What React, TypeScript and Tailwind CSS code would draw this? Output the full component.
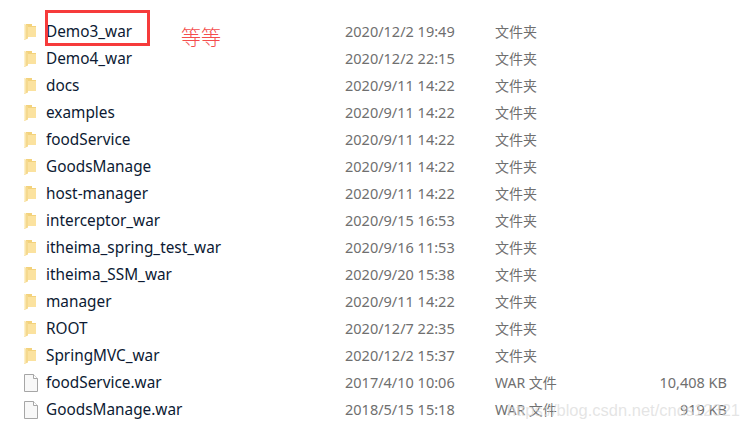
import React from "react"

const files = [
  { name: "Demo3_war", date: "2020/12/2 19:49", type: "文件夹", size: "" },
  { name: "Demo4_war", date: "2020/12/2 22:15", type: "文件夹", size: "" },
  { name: "docs", date: "2020/9/11 14:22", type: "文件夹", size: "" },
  { name: "examples", date: "2020/9/11 14:22", type: "文件夹", size: "" },
  { name: "foodService", date: "2020/9/11 14:22", type: "文件夹", size: "" },
  { name: "GoodsManage", date: "2020/9/11 14:22", type: "文件夹", size: "" },
  { name: "host-manager", date: "2020/9/11 14:22", type: "文件夹", size: "" },
  { name: "interceptor_war", date: "2020/9/15 16:53", type: "文件夹", size: "" },
  { name: "itheima_spring_test_war", date: "2020/9/16 11:53", type: "文件夹", size: "" },
  { name: "itheima_SSM_war", date: "2020/9/20 15:38", type: "文件夹", size: "" },
  { name: "manager", date: "2020/9/11 14:22", type: "文件夹", size: "" },
  { name: "ROOT", date: "2020/12/7 22:35", type: "文件夹", size: "" },
  { name: "SpringMVC_war", date: "2020/12/2 15:37", type: "文件夹", size: "" },
  { name: "foodService.war", date: "2017/4/10 10:06", type: "WAR 文件", size: "10,408 KB" },
  { name: "GoodsManage.war", date: "2018/5/15 15:18", type: "WAR 文件", size: "919 KB" },
]

function FolderIcon() {
  return (
    <svg width="13" height="18" viewBox="0 0 13 18">
      <path d="M2 1h6v2h4v11H2z" fill="#f3d27c" />
      <path d="M4 4h8v10H4z" fill="#fbe29f" />
      <path d="M0 1l4 1.500v13l-3.500 1.500L0 16z" fill="#f5d98e" />
      <path d="M0 1l1.500 .5v15L0 16z" fill="#fdf0c8" />
    </svg>
  )
}

function FileIcon() {
  return (
    <svg width="14" height="18" viewBox="0 0 14 18">
      <path d="M.5.5h9l4 4v13H.5z" fill="#f8f8f8" stroke="#a6a6a6" />
      <path d="M9.500.5v4h4" fill="#fff" stroke="#a6a6a6" />
    </svg>
  )
}

export default function App() {
  return (
    <div className="relative w-[750px] h-[430px] overflow-hidden bg-white pt-[18px] text-[15.350px] font-['Noto_Sans','Noto_Sans_CJK_SC',sans-serif]">
      {files.map((f) => (
        <div key={f.name} className="flex items-center h-[27px]">
          <div className="flex w-[46px] pl-[24px] shrink-0">
            {f.type === "文件夹" ? <FolderIcon /> : <FileIcon />}
          </div>
          <div className="w-[299px] shrink-0 text-[#0c1a33]">{f.name}</div>
          <div className="w-[150px] shrink-0 text-[#6f6f6f] text-[14.500px]">{f.date}</div>
          <div className="w-[100px] shrink-0 text-[#6f6f6f] text-[14px]">{f.type}</div>
          <div className="w-[132px] shrink-0 text-right text-[#6f6f6f] text-[14.500px]">{f.size}</div>
        </div>
      ))}

      {/* red annotation over the first row */}
      <div className="absolute left-[45px] top-[10px] w-[105px] h-[36px] border-[3px] border-[#f63b3b]" />
      <div className="absolute left-[181px] top-[24px] text-[20px] leading-[28px] font-light text-[#f44c4c]">等等</div>

      {/* csdn watermark */}
      <div className="absolute left-[507px] top-[400px] text-[16.500px] leading-[20px] whitespace-nowrap text-[#d9d9d9]/70 font-['Liberation_Sans',sans-serif]">
        https://blog.csdn.net/cnds12321
      </div>
    </div>
  )
}
